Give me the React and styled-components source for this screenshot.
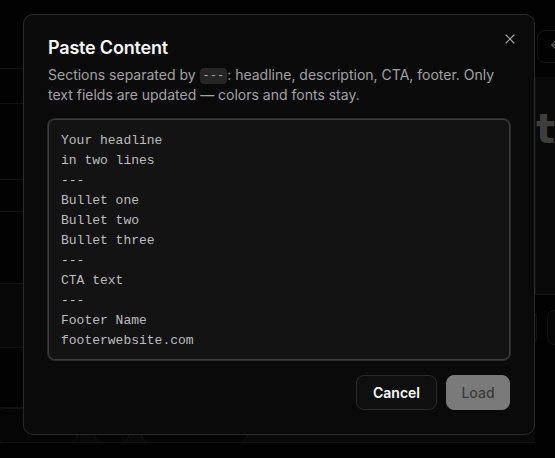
import React, { useEffect, useRef } from "react";
import styled, { createGlobalStyle } from "styled-components";
import { X, Undo2 } from "lucide-react";

const GlobalStyle = createGlobalStyle`
  * { box-sizing: border-box; }
  html, body { margin: 0; padding: 0; background: #000; }
  body {
    font-family: Inter, "Noto Sans", sans-serif;
    color: #fafafa;
    -webkit-font-smoothing: antialiased;
  }
`;

const sample = `Your headline
in two lines
---
Bullet one
Bullet two
Bullet three
---
CTA text
---
Footer Name
footerwebsite.com`;

// background app (dimmed behind the dialog)
const Page = styled.div`
  display: grid;
  grid-template-columns: 535px 1fr;
  height: 100vh;
  overflow: hidden;
  background: #050505;
`;

const Sidebar = styled.div`
  display: flex;
  flex-direction: column;
`;

const Row = styled.div`
  height: ${(p) => p.h}px;
  flex-shrink: 0;
  border-bottom: 1px solid #262626;
  background: ${(p) => (p.shade ? "#121212" : "transparent")};
  display: flex;
  align-items: center;
  gap: 12px;
`;

const Ghost = styled.div`
  height: 35px;
  width: ${(p) => p.w}px;
  margin-left: ${(p) => p.ml || 0}px;
  border: 1px solid #2a2a2a;
  border-radius: 8px;
  background: #0c0c0c;
`;

const Preview = styled.div`
  display: flex;
  flex-direction: column;
  padding-top: 30px;
`;

const IconBtn = styled.div`
  width: 40px;
  height: 33px;
  margin-left: 2px;
  border: 1px solid #2a2a2a;
  border-radius: 8px;
  display: flex;
  align-items: center;
  justify-content: center;
  color: #aaa;
`;

const Canvas = styled.div`
  margin-top: 14px;
  height: 218px;
  border-left: 1px solid #2a2a2a;
  border-bottom: 1px solid #2a2a2a;
  background: #141414;
  padding: 32px 0 0 0;
  font: 700 40px/1 "DejaVu Sans", sans-serif;
  color: #8a8a8a;
  white-space: nowrap;
`;

const CanvasBar = styled.div`
  display: flex;
  gap: 10px;
  margin-top: 15px;
  margin-left: -20px;
`;

const Overlay = styled.div`
  position: fixed;
  inset: 0;
  background: rgba(0, 0, 0, 0.55);
`;

// dialog
const Dialog = styled.div`
  position: fixed;
  top: 14px;
  left: 23px;
  width: 512px;
  padding: 21px 24px 24px;
  border: 1px solid #2a2a2a;
  border-radius: 10px;
  background: #0a0a0a;
  display: flex;
  flex-direction: column;
`;

const Close = styled.button`
  position: absolute;
  top: 16px;
  right: 16px;
  padding: 0;
  border: 0;
  background: none;
  color: #a3a3a3;
  display: flex;
`;

const Title = styled.h2`
  margin: 0;
  font-size: 18px;
  line-height: 24px;
  font-weight: 600;
  color: #fafafa;
  letter-spacing: -0.2px;
`;

const Desc = styled.p`
  margin: 5px 0 0;
  font-size: 14px;
  line-height: 20px;
  color: #a3a3a3;
`;

const Code = styled.code`
  font-family: "Liberation Mono", monospace;
  font-size: 12px;
  line-height: 1;
  vertical-align: 1px;
  background: #262626;
  color: #a3a3a3;
  padding: 1px 3px;
  border-radius: 4px;
`;

const Area = styled.textarea`
  margin-top: 14px;
  width: 100%;
  height: 241px;
  padding: 11px 12px 7px;
  resize: none;
  border: 1px solid #3d3d3d;
  box-shadow: 0 0 0 1px #2b2b2b;
  border-radius: 7px;
  background: #131313;
  color: #bdbdbd;
  font-family: "Liberation Mono", monospace;
  font-size: 13px;
  line-height: 20px;
  outline: none;
  overflow: hidden;
  caret-color: #e5e5e5;
`;

const Footer = styled.div`
  margin-top: 15px;
  display: flex;
  justify-content: flex-end;
  gap: 9px;
`;

const Button = styled.button`
  height: 35px;
  width: ${(p) => p.w}px;
  padding: 0;
  border-radius: 8px;
  font-family: Inter, sans-serif;
  font-size: 14px;
  font-weight: ${(p) => (p.primary ? 500 : 600)};
  border: 1px solid ${(p) => (p.primary ? "#7a7a7a" : "#2a2a2a")};
  background: ${(p) => (p.primary ? "#7a7a7a" : "#0f0f0f")};
  color: ${(p) => (p.primary ? "#3a3a3a" : "#ffffff")};
`;

export default function App() {
  const ref = useRef(null);
  useEffect(() => {
    if (ref.current) {
      ref.current.focus();
      ref.current.setSelectionRange(0, 0);
    }
  }, []);

  return (
    <>
      <GlobalStyle />
      <Page>
        <Sidebar>
          <Row h={69} />
          <Row h={35} />
          <Row h={76} />
          <Row h={32} />
          <Row h={72} />
          <Row h={64} shade />
          <Row h={60} />
          <Row h={35} shade>
            <Ghost w={82} ml={-4} />
            <Ghost w={35} ml={4} />
            <Ghost w={107} />
          </Row>
        </Sidebar>
        <Preview>
          <IconBtn>
            <Undo2 size={16} />
          </IconBtn>
          <Canvas>text</Canvas>
          <CanvasBar>
            <Ghost w={22} />
            <Ghost w={40} />
          </CanvasBar>
        </Preview>
      </Page>
      <Overlay />
      <Dialog>
        <Close aria-label="Close">
          <X size={16} strokeWidth={1.75} />
        </Close>
        <Title>Paste Content</Title>
        <Desc>
          Sections separated by <Code>---</Code>: headline, description, CTA,
          footer. Only text fields are updated — colors and fonts stay.
        </Desc>
        <Area ref={ref} defaultValue={sample} spellCheck={false} />
        <Footer>
          <Button w={81}>Cancel</Button>
          <Button w={64} primary>
            Load
          </Button>
        </Footer>
      </Dialog>
    </>
  );
}
